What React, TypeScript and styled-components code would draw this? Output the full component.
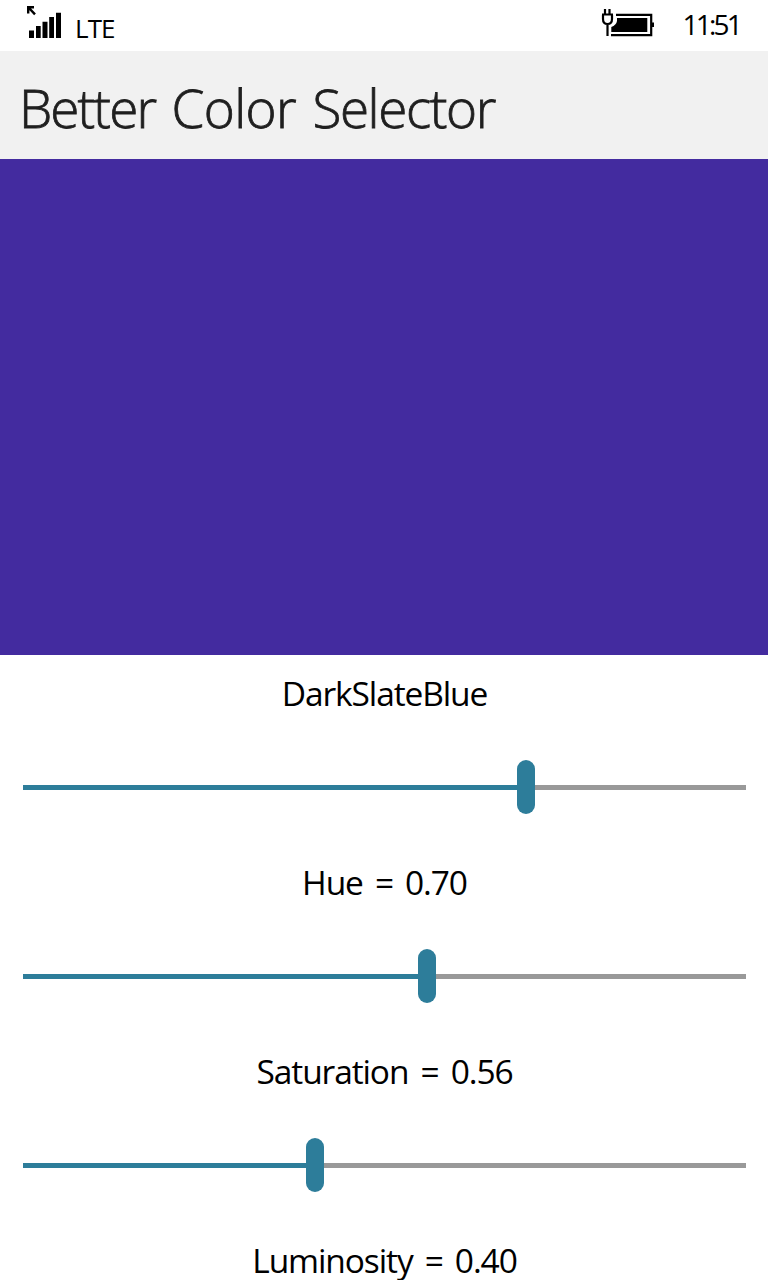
import React from "react";
import styled, { createGlobalStyle } from "styled-components";

const GlobalStyle = createGlobalStyle`
  * { box-sizing: border-box; }
  body { margin: 0; background: #fff; }
`;

const Screen = styled.div`
  width: 768px;
  height: 1280px;
  overflow: hidden;
  display: flex;
  flex-direction: column;
  background: #fff;
  color: #000;
  font-family: "Open Sans", "Noto Sans", sans-serif;
`;

const StatusBar = styled.div`
  flex: none;
  height: 51px;
  padding: 0 28px 0 26px;
  display: flex;
  align-items: flex-start;
`;

const StatusText = styled.span<{ $size: number; $top: number; $spacing: number }>`
  font-size: ${(p) => p.$size}px;
  line-height: 36px;
  padding-top: ${(p) => p.$top}px;
  letter-spacing: ${(p) => p.$spacing}px;
`;

const SignalIcon = styled.svg`
  display: block;
  margin-right: 13px;
`;

const BatteryIcon = styled.svg`
  display: block;
  margin-left: auto;
  margin-right: 28px;
`;

const Header = styled.header`
  flex: none;
  height: 108px;
  padding: 5px 19px 0;
  display: flex;
  align-items: center;
  background: #f1f1f1;
`;

const Title = styled.h1`
  margin: 0;
  font-size: 53px;
  font-weight: 300;
  line-height: 103px;
  color: #1f1f1f;
  white-space: nowrap;
  word-spacing: 2.5px;
  -webkit-text-stroke: 0.8px #1f1f1f;
`;

const Word = styled.span<{ $spacing: number }>`
  letter-spacing: ${(p) => p.$spacing}px;
`;

const Swatch = styled.div`
  flex: none;
  height: 496px;
  background: #432b9f;
`;

const Label = styled.div`
  flex: none;
  height: 78px;
  padding-left: 1px;
  line-height: 76px;
  font-size: 33.5px;
  text-align: center;
  white-space: nowrap;
  letter-spacing: -1.1px;
  word-spacing: 4.5px;
`;

const SliderRow = styled.div`
  flex: none;
  height: 111px;
  padding: 27px 22px 30px 23px;
  display: flex;
  align-items: center;
`;

const Filled = styled.div`
  height: 5px;
  margin-top: 1px;
  background: #2d7d9a;
`;

const Thumb = styled.div`
  flex: none;
  width: 18px;
  height: 54px;
  border-radius: 9px;
  background: #2d7d9a;
`;

const Remaining = styled.div`
  flex: 1;
  height: 5px;
  margin-top: 1px;
  background: #999;
`;

const TRACK = 705;

const sliders = [
  { text: "Hue = 0.70", position: 494 },
  { text: "Saturation = 0.56", position: 395 },
  { text: "Luminosity = 0.40", position: 283 },
];

function Slider({ position }: { position: number }) {
  return (
    <SliderRow>
      <Filled style={{ width: Math.min(position, TRACK) }} />
      <Thumb />
      <Remaining />
    </SliderRow>
  );
}

export default function App() {
  return (
    <>
      <GlobalStyle />
      <Screen>
        <StatusBar>
          <SignalIcon width="36" height="40" viewBox="26 0 36 40">
            <path d="M34 7.200H28.200V13.500M28.500 7.500L35 14.300" fill="none" stroke="#000" strokeWidth="2.4" />
            <path d="M29 30.500h5v7.500h-5zM36 26h4.700v12h-4.700zM42.500 21.700h5v16.300h-5zM49.200 17h4.800v21h-4.800zM56 12.700h5v25.300h-5z" />
          </SignalIcon>
          <StatusText $size={26} $top={10} $spacing={-0.9}>LTE</StatusText>
          <BatteryIcon width="54" height="40" viewBox="601 0 54 40">
            <path d="M616 14.800h35.200v20.300H611" fill="none" stroke="#000" strokeWidth="2.2" />
            <path d="M617 18h30.300v14H611.300v-5q5-2 5.700-6zM652 22.500h2v4.500h-2z" />
            <path d="M605 9v5M609.500 9v5M602 14.500h11M603 15v4q0 5 4.500 5t4.500-5v-4M607.500 24v12" fill="none" stroke="#000" strokeWidth="2.2" />
          </BatteryIcon>
          <StatusText $size={28} $top={6} $spacing={-2.8}>11:51</StatusText>
        </StatusBar>
        <Header>
          <Title>
            <Word $spacing={-1.9}>Better</Word> <Word $spacing={-0.6}>Color</Word>{" "}
            <Word $spacing={-1.4}>Selector</Word>
          </Title>
        </Header>
        <Swatch />
        <Label>DarkSlateBlue</Label>
        {sliders.map((s) => (
          <React.Fragment key={s.text}>
            <Slider position={s.position} />
            <Label>{s.text}</Label>
          </React.Fragment>
        ))}
      </Screen>
    </>
  );
}
